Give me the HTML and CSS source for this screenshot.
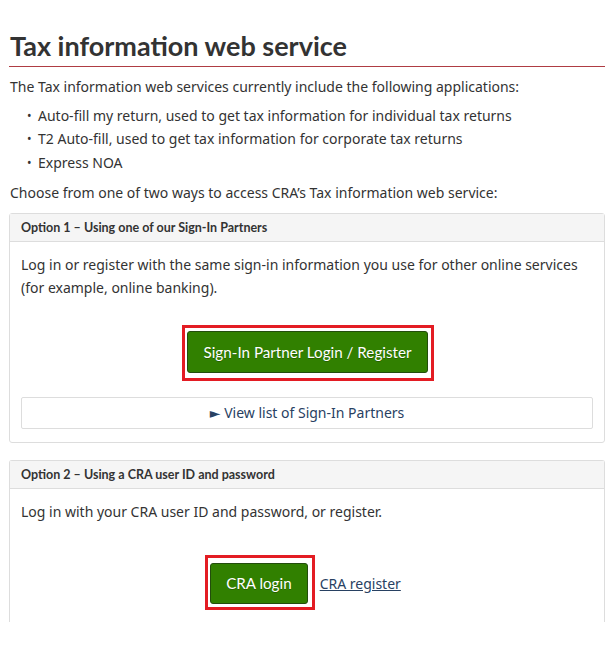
FILE: index.html
```html
<!DOCTYPE html>
<html lang="en">
<head>
<meta charset="utf-8">
<title>Tax information web service</title>
<link rel="stylesheet" href="styles.css">
</head>
<body>
<main class="page">
  <h1 class="title">Tax information web service</h1>
  <p class="text intro">The Tax information web services currently include the following applications:</p>
  <ul class="apps">
    <li>Auto-fill my return, used to get tax information for individual tax returns</li>
    <li>T2 Auto-fill, used to get tax information for corporate tax returns</li>
    <li>Express NOA</li>
  </ul>
  <p class="text">Choose from one of two ways to access CRA’s Tax information web service:</p>

  <section class="panel">
    <h2 class="panel-head">Option 1 – Using one of our Sign-In Partners</h2>
    <div class="panel-body">
      <p class="text">Log in or register with the same sign-in information you use for other online services (for example, online banking).</p>
      <div class="center">
        <span class="highlight"><a class="btn" href="#">Sign-In Partner Login / Register</a></span>
      </div>
      <div class="details">&#9658; View list of Sign-In Partners</div>
    </div>
  </section>

  <section class="panel panel-cut">
    <h2 class="panel-head">Option 2 – Using a CRA user ID and password</h2>
    <div class="panel-body">
      <p class="text">Log in with your CRA user ID and password, or register.</p>
      <div class="cra-row">
        <span class="highlight highlight-sm"><a class="btn btn-sm" href="#">CRA login</a></span>
        <a class="link" href="#">CRA register</a>
      </div>
    </div>
  </section>
</main>
</body>
</html>
```

FILE: styles.css
```css
* { box-sizing: border-box; }
html, body { margin: 0; padding: 0; background: #fff; }
body {
  font-family: "Noto Sans", "DejaVu Sans", sans-serif;
  font-size: 14px;
  color: #333;
}
.page {
  width: 596px;
  margin-left: 9px;
  height: 622px;
  overflow: hidden;
}
.title {
  font-family: Lato, "Noto Sans", sans-serif;
  font-weight: 700;
  font-size: 27px;
  line-height: 30px;
  margin: 0;
  padding: 31px 0 5px 1px;
  border-bottom: 1px solid #af3c43;
  color: #333;
}
.text {
  margin: 0;
  line-height: 23.5px;
  padding-left: 1px;
}
.intro { margin-top: 8px; }
.apps {
  list-style: none;
  margin: 5px 0 7px 0;
  padding: 0 0 0 18px;
}
.apps li {
  line-height: 23.5px;
  position: relative;
  padding-left: 11px;
}
.apps li::before {
  content: "•";
  position: absolute;
  left: 0;
  top: 0;
  font-size: 12px;
}
.panel {
  border: 1px solid #ddd;
  border-radius: 3px;
  margin-top: 8px;
}
.panel + .panel { margin-top: 17px; }
.panel-head {
  margin: 0;
  background: #f5f5f5;
  border-bottom: 1px solid #ddd;
  font-family: Lato, "Noto Sans", sans-serif;
  font-weight: 700;
  font-size: 12.5px;
  line-height: 27px;
  padding: 0 11px;
  color: #333;
}
.panel-body {
  padding: 11px 11px 13px 11px;
}
.panel-body .text { padding-left: 0; }
.center {
  display: flex;
  justify-content: center;
  margin-top: 25px;
  padding-left: 2px;
}
.highlight {
  display: inline-block;
  border: 3px solid #e31c23;
  padding: 3px 3px 5px 2px;
}
.btn {
  display: block;
  background: #318000;
  border: 1px solid #234d0d;
  border-radius: 3px;
  color: #fff;
  text-decoration: none;
  font-family: Lato, "Noto Sans", sans-serif;
  font-size: 15.2px;
  line-height: 40px;
  padding: 0 16px;
  text-shadow: 0 1px 0 rgba(0,0,0,0.25);
}
.details {
  margin-top: 16px;
  border: 1px solid #ddd;
  border-radius: 2px;
  text-align: center;
  color: #284162;
  line-height: 30px;
}
.panel-cut {
  border-bottom: none;
  border-radius: 3px 3px 0 0;
  height: 200px;
}
.cra-row {
  display: flex;
  justify-content: center;
  align-items: baseline;
  margin-top: 32px;
  padding-right: 8px;
  gap: 5px;
}
.highlight-sm { padding: 5px 4px 3px 2px; }
.btn-sm { padding: 0 15px; line-height: 39px; }
.link {
  color: #284162;
  text-decoration: underline;
}
```
